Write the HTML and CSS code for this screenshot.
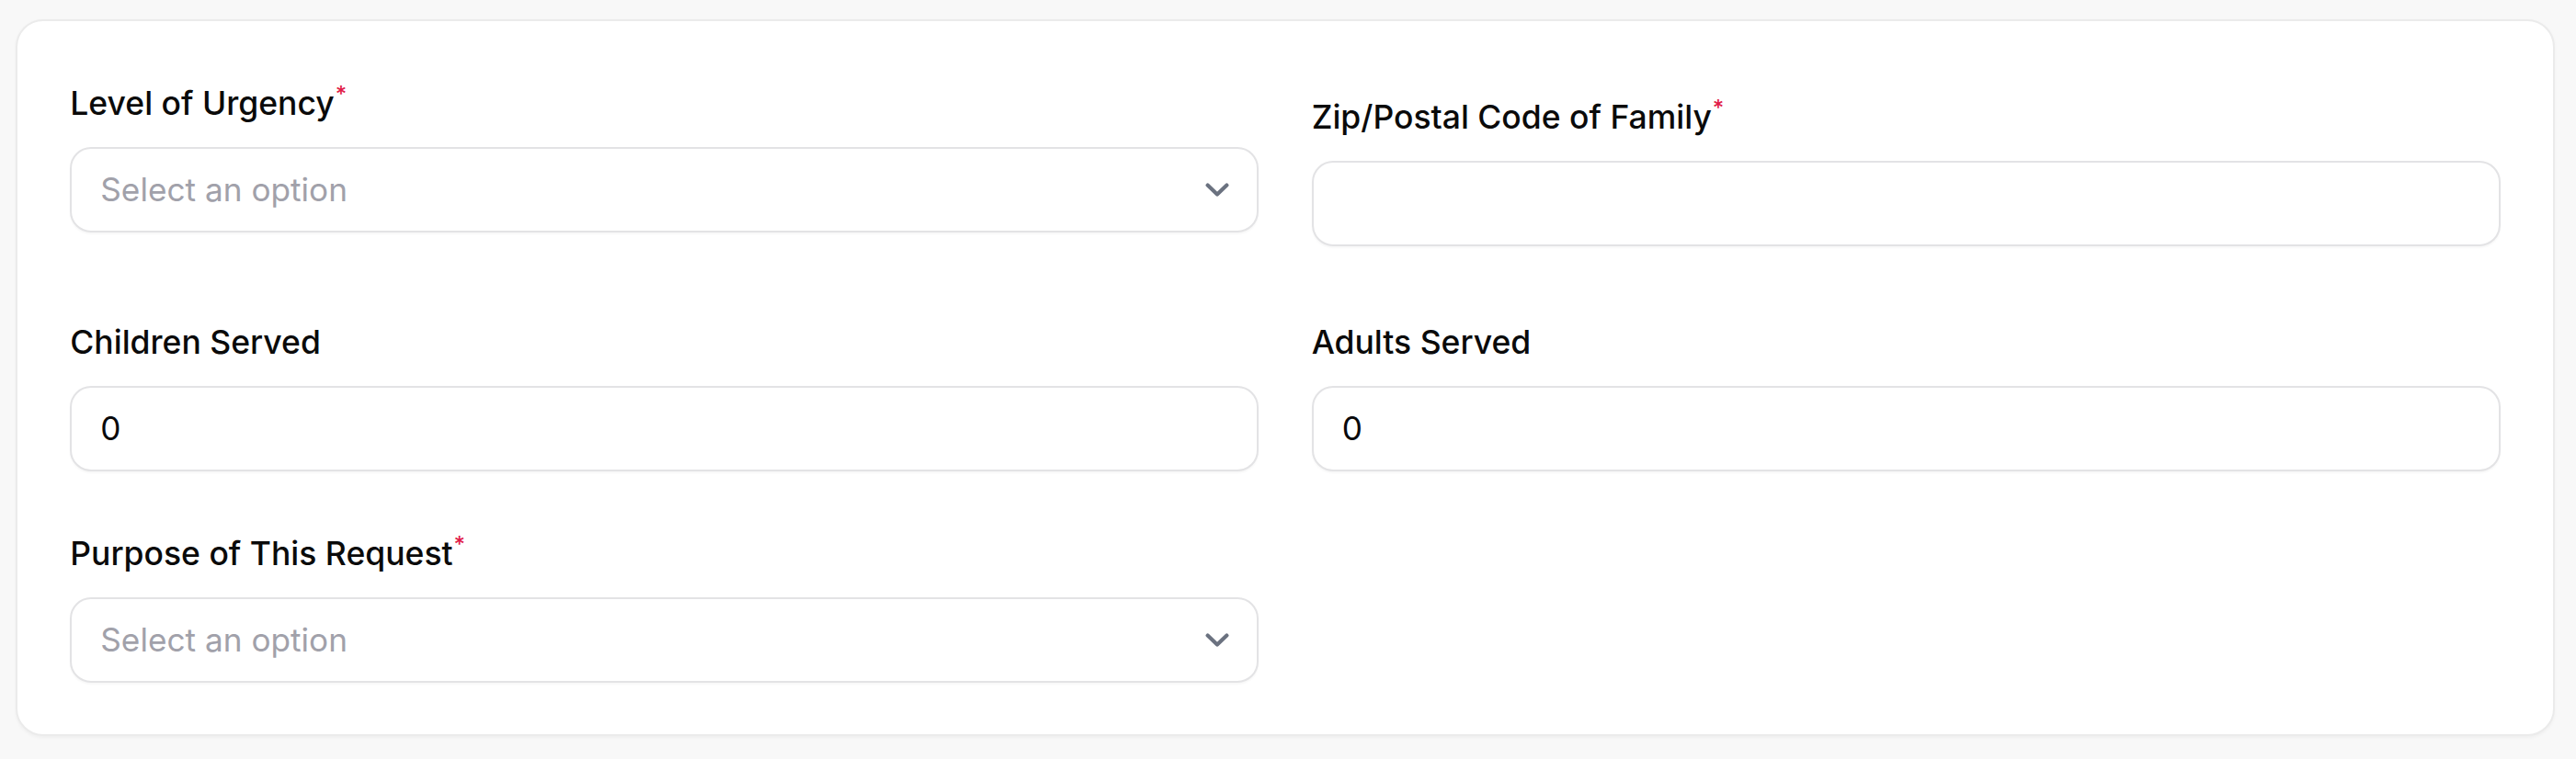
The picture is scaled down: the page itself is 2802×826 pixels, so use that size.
FILE: index.html
```html
<!DOCTYPE html>
<html lang="en">
<head>
<meta charset="utf-8">
<title>Request Form</title>
<link rel="stylesheet" href="styles.css">
</head>
<body>
<main class="page">
  <section class="card">
    <div class="row row-first">
      <div class="field">
        <label class="label">Level of Urgency<span class="req">*</span></label>
        <div class="control select">
          <span class="placeholder">Select an option</span>
          <svg class="chevron" viewBox="0 0 26 16" width="26" height="16" aria-hidden="true"><polyline points="2.6,2.6 13,12.6 23.4,2.6" fill="none" stroke="currentColor" stroke-width="4.2" stroke-linecap="round" stroke-linejoin="round"/></svg>
        </div>
      </div>
      <div class="field field-shifted">
        <label class="label">Zip/Postal Code of Family<span class="req">*</span></label>
        <input class="control input" type="text" value="">
      </div>
    </div>
    <div class="row row-second">
      <div class="field">
        <label class="label">Children Served</label>
        <input class="control input" type="text" value="0">
      </div>
      <div class="field">
        <label class="label">Adults Served</label>
        <input class="control input" type="text" value="0">
      </div>
    </div>
    <div class="row row-third">
      <div class="field">
        <label class="label">Purpose of This Request<span class="req">*</span></label>
        <div class="control select">
          <span class="placeholder">Select an option</span>
          <svg class="chevron" viewBox="0 0 26 16" width="26" height="16" aria-hidden="true"><polyline points="2.6,2.6 13,12.6 23.4,2.6" fill="none" stroke="currentColor" stroke-width="4.2" stroke-linecap="round" stroke-linejoin="round"/></svg>
        </div>
      </div>
      <div class="field"></div>
    </div>
  </section>
</main>
</body>
</html>
```
FILE: styles.css
```css
html, body {
  margin: 0;
  background: #f8f8f8;
}
body {
  font-family: Inter, "Noto Sans", "Liberation Sans", sans-serif;
  color: #0a0a0a;
}
.page {
  padding: 20.7px 23.3px 24px 17.3px;
}
.card {
  background: #ffffff;
  border: 2px solid #ebebeb;
  border-radius: 30px;
  box-shadow: 0 1.8px 3.6px rgba(0, 0, 0, 0.04);
  padding: 68.5px 57px 56.4px 57px;
}
.row {
  display: grid;
  grid-template-columns: 1fr 1fr;
  column-gap: 57.3px;
  align-items: start;
}
.row-second {
  margin-top: 82.9px;
}
.row-third {
  margin-top: 68.5px;
}
.field {
  display: flex;
  flex-direction: column;
  gap: 26.2px;
}
.field-shifted {
  margin-top: 15px;
}
.label {
  font-size: 35.5px;
  line-height: 43px;
  font-weight: 500;
  color: #0a0a0a;
  letter-spacing: 0;
  white-space: nowrap;
}
.req {
  color: #e11d48;
  font-size: 24px;
  vertical-align: 14px;
  line-height: 0;
  margin-left: 1px;
  font-weight: 500;
}
.control {
  box-sizing: border-box;
  height: 92.6px;
  width: 100%;
  border: 2px solid #e3e3e5;
  border-radius: 23px;
  background: #ffffff;
  box-shadow: 0 1.8px 2px rgba(0, 0, 0, 0.03);
  font-family: Inter, "Noto Sans", "Liberation Sans", sans-serif;
  font-size: 35.2px;
  color: #09090b;
}
.input {
  display: block;
  padding: 0 31px;
  outline: none;
  margin: 0;
}
.select {
  display: flex;
  align-items: center;
  justify-content: space-between;
  padding: 0 30.7px 0 31px;
}
.placeholder {
  color: #a1a1aa;
  line-height: 1;
}
.chevron {
  color: #6b7280;
  display: block;
}
```
